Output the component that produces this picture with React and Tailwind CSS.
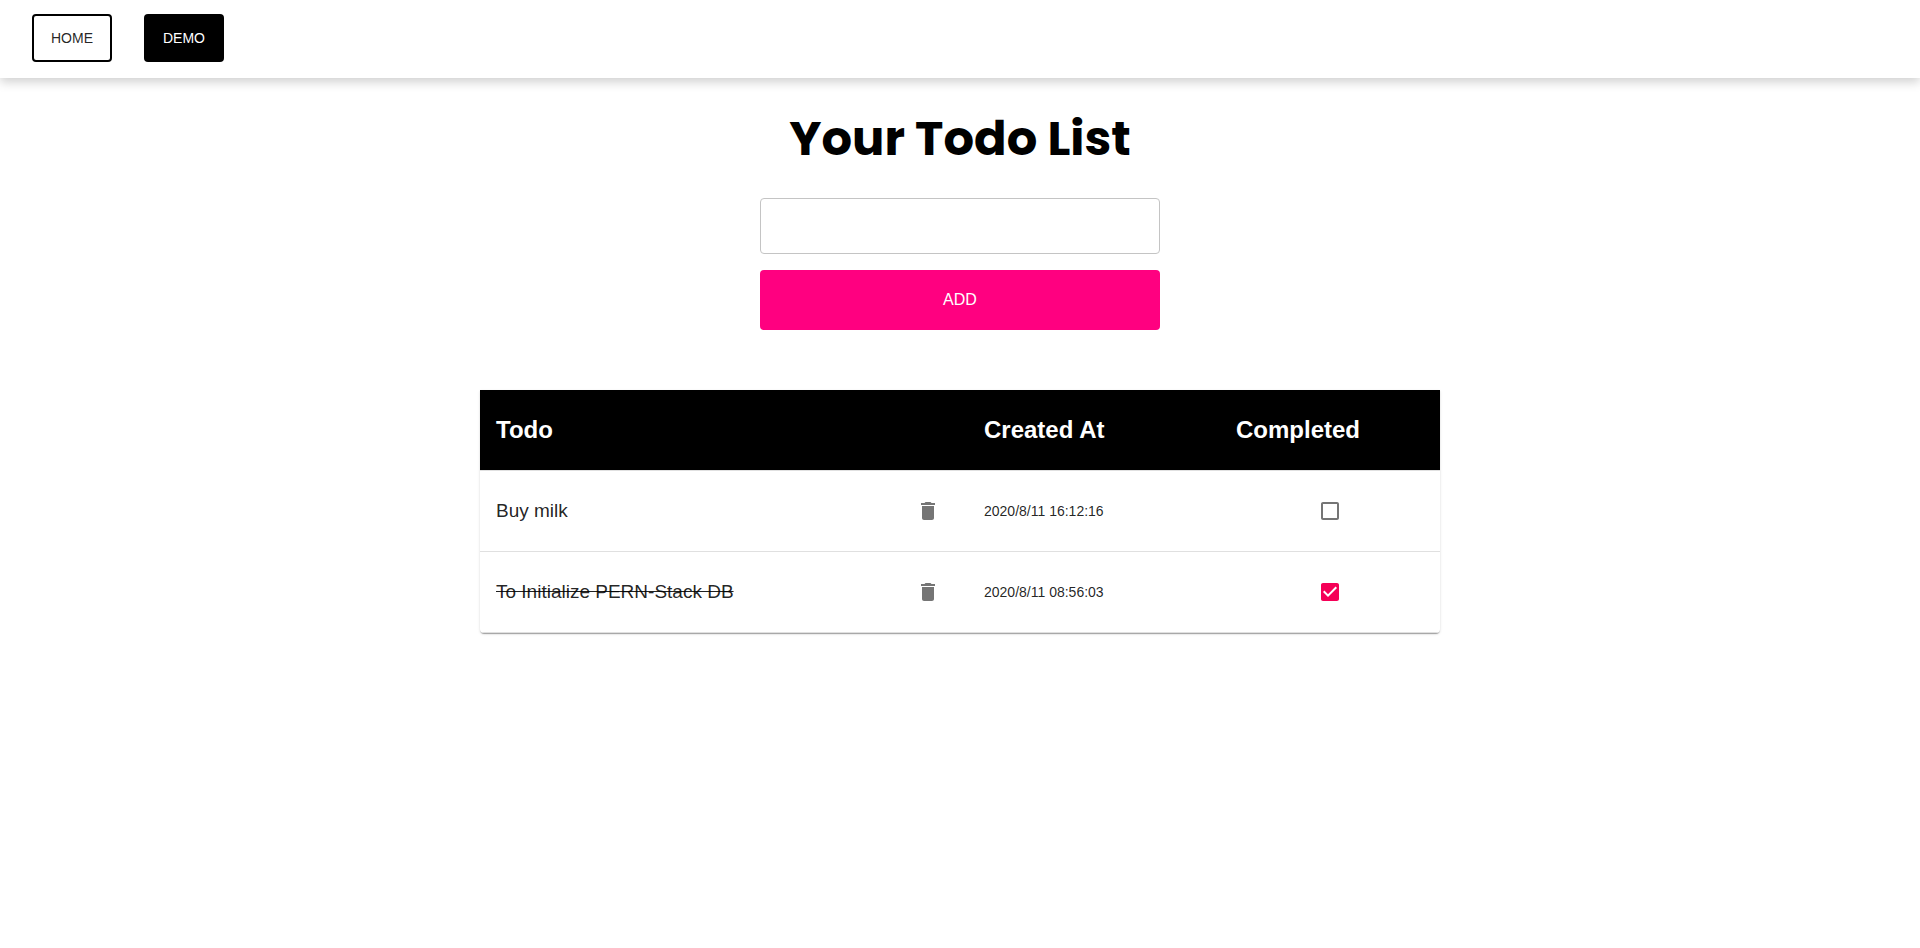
import { useState } from "react";

const initialTodos = [
  { id: 1, title: "Buy milk", createdAt: "2020/8/11 16:12:16", completed: false },
  { id: 2, title: "To Initialize PERN-Stack DB", createdAt: "2020/8/11 08:56:03", completed: true },
];

function DeleteIcon() {
  return (
    <svg viewBox="0 0 24 24" className="size-6 fill-current" aria-hidden="true">
      <path d="M6 19c0 1.1.9 2 2 2h8c1.1 0 2-.9 2-2V7H6v12zM19 4h-3.500l-1-1h-5l-1 1H5v2h14V4z" />
    </svg>
  );
}

function Checkbox({ checked, onChange, label }) {
  return (
    <span className="inline-grid size-6 place-items-center align-middle">
      <input
        type="checkbox"
        aria-label={label}
        checked={checked}
        onChange={onChange}
        className="col-start-1 row-start-1 size-6 cursor-pointer appearance-none"
      />
      <svg
        viewBox="0 0 24 24"
        aria-hidden="true"
        className={`pointer-events-none col-start-1 row-start-1 size-6 fill-current ${checked ? "text-[#f50057]" : "text-[#757575]"}`}
      >
        {checked ? (
          <path d="M19 3H5c-1.110 0-2 .9-2 2v14c0 1.100.89 2 2 2h14c1.110 0 2-.9 2-2V5c0-1.100-.89-2-2-2zm-9 14l-5-5 1.410-1.410L10 14.170l7.590-7.590L19 8l-9 9z" />
        ) : (
          <path d="M19 5v14H5V5h14m0-2H5c-1.100 0-2 .9-2 2v14c0 1.100.9 2 2 2h14c1.100 0 2-.9 2-2V5c0-1.100-.9-2-2-2z" />
        )}
      </svg>
    </span>
  );
}

export default function App() {
  const [todos, setTodos] = useState(initialTodos);
  const [text, setText] = useState("");

  const addTodo = (event) => {
    event.preventDefault();
    if (!text.trim()) return;
    setTodos([
      { id: Date.now(), title: text, createdAt: new Date().toLocaleString("ja-JP"), completed: false },
      ...todos,
    ]);
    setText("");
  };

  const toggle = (id) =>
    setTodos(todos.map((todo) => (todo.id === id ? { ...todo, completed: !todo.completed } : todo)));

  return (
    <div className="min-h-screen bg-white font-['Liberation_Sans',Arial,sans-serif] text-black/87">
      <nav className="flex gap-8 px-8 pt-[14px] pb-4 shadow-[0_4px_10px_0_rgba(0,0,0,0.19)]">
        <a href="#home" className="flex h-12 w-20 items-center justify-center rounded border-2 border-black text-sm">
          HOME
        </a>
        <a href="#demo" className="flex h-12 w-20 items-center justify-center rounded bg-black text-sm text-white">
          DEMO
        </a>
      </nav>

      <main className="flex flex-col items-center">
        <h1 className="mt-[31px] mb-[29px] font-['Poppins','Inter',sans-serif] text-5xl leading-[60px] font-bold text-black">
          Your Todo List
        </h1>

        <form onSubmit={addTodo} className="flex w-full max-w-[400px] flex-col gap-4">
          <input
            type="text"
            aria-label="New todo"
            value={text}
            onChange={(event) => setText(event.target.value)}
            className="h-14 w-full rounded border border-[#c4c4c4] px-4"
          />
          <button type="submit" className="h-[60px] w-full cursor-pointer rounded bg-[#ff0080] text-base text-white">
            ADD
          </button>
        </form>

        <div className="mt-[60px] w-full overflow-hidden rounded-b shadow-[0_2px_1px_-1px_rgba(0,0,0,0.2),0_1px_1px_0_rgba(0,0,0,0.14),0_1px_3px_0_rgba(0,0,0,0.12)] lg:w-1/2">
          <table className="w-full table-fixed border-separate border-spacing-0 text-left [&_td]:border-b [&_td]:border-[#e0e0e0] [&_th]:border-b [&_th]:border-[#e0e0e0]">
            <colgroup>
              <col />
              <col className="w-20" />
              <col className="w-[252px]" />
              <col className="w-[220px]" />
            </colgroup>
            <thead>
              <tr className="h-[81px] text-2xl text-white [&_th]:bg-black">
                <th scope="col" colSpan={2} className="px-4 font-bold">Todo</th>
                <th scope="col" className="px-4 font-bold">Created At</th>
                <th scope="col" className="px-4 font-bold">Completed</th>
              </tr>
            </thead>
            <tbody>
              {todos.map((todo) => (
                <tr key={todo.id} className="h-[81px]">
                  <td className={`px-4 text-[19px] ${todo.completed ? "line-through" : ""}`}>{todo.title}</td>
                  <td className="text-center">
                    <button
                      type="button"
                      aria-label={`Delete ${todo.title}`}
                      onClick={() => setTodos(todos.filter((item) => item.id !== todo.id))}
                      className="cursor-pointer p-3 align-middle text-[#757575]"
                    >
                      <DeleteIcon />
                    </button>
                  </td>
                  <td className="px-4 text-sm">{todo.createdAt}</td>
                  <td className="text-center">
                    <Checkbox
                      checked={todo.completed}
                      onChange={() => toggle(todo.id)}
                      label={`Completed: ${todo.title}`}
                    />
                  </td>
                </tr>
              ))}
            </tbody>
          </table>
        </div>
      </main>
    </div>
  );
}
